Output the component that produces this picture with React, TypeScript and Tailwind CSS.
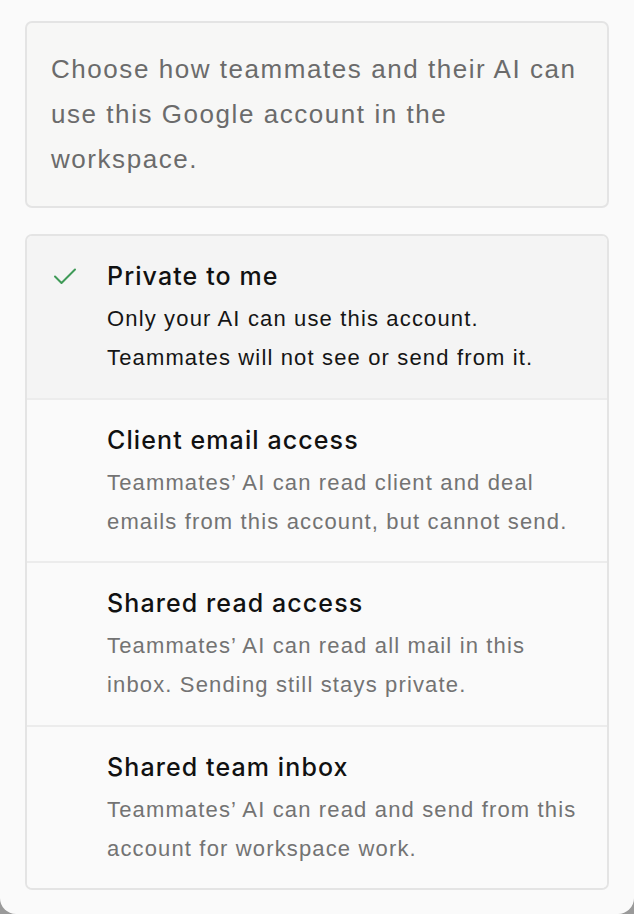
const options = [
  {
    title: "Private to me",
    lines: ["Only your AI can use this account.", "Teammates will not see or send from it."],
    selected: true,
  },
  {
    title: "Client email access",
    lines: ["Teammates’ AI can read client and deal", "emails from this account, but cannot send."],
  },
  {
    title: "Shared read access",
    lines: ["Teammates’ AI can read all mail in this", "inbox. Sending still stays private."],
  },
  {
    title: "Shared team inbox",
    lines: ["Teammates’ AI can read and send from this", "account for workspace work."],
  },
];

function Check() {
  return (
    <svg viewBox="0 0 24 24" className="h-[24px] w-[24px] text-[#3f9a57]" fill="none" stroke="currentColor" strokeWidth="2" strokeLinecap="round" strokeLinejoin="round" aria-hidden>
      <path d="M2 12.5l6.5 6.5L22 5.5" />
    </svg>
  );
}

export default function App() {
  return (
    <div className="h-[914px] w-[634px] bg-[#9a9a9a] font-['Liberation_Sans',Arial,sans-serif]">
      <div className="flex h-full flex-col gap-[26px] rounded-b-[16px] bg-[#fafafa] px-[25px] pt-[21px]">
        <div className="rounded-[7px] border-2 border-[#e4e4e4] bg-[#f7f7f6] px-[24px] py-[24px]">
          <p className="text-[26px] leading-[45px] tracking-[1.55px] text-[#6b6b6b]">
            Choose how teammates and their AI can use this Google account in the workspace.
          </p>
        </div>

        <div className="flex h-[656px] flex-col overflow-hidden rounded-[7px] border-2 border-[#e4e4e4]">
          {options.map((o, i) => (
            <div
              key={o.title}
              className={`flex flex-1 items-start px-[26px] pt-[22px] ${i > 0 ? "border-t-2 border-[#ececec]" : ""} ${o.selected ? "bg-[#f4f4f4]" : "bg-[#fafafa]"}`}
            >
              <div className="flex h-[36px] w-[54px] shrink-0 items-center">
                {o.selected && <Check />}
              </div>
              <div>
                <div className="font-['Inter',sans-serif] text-[25px] font-medium leading-[36px] tracking-[1.1px] text-[#111]">{o.title}</div>
                <div className={`mt-[5px] text-[22px] leading-[39px] tracking-[1.15px] ${o.selected ? "text-[#151515]" : "text-[#737373]"}`}>
                  {o.lines.map((l) => (
                    <div key={l}>{l}</div>
                  ))}
                </div>
              </div>
            </div>
          ))}
        </div>
      </div>
    </div>
  );
}
